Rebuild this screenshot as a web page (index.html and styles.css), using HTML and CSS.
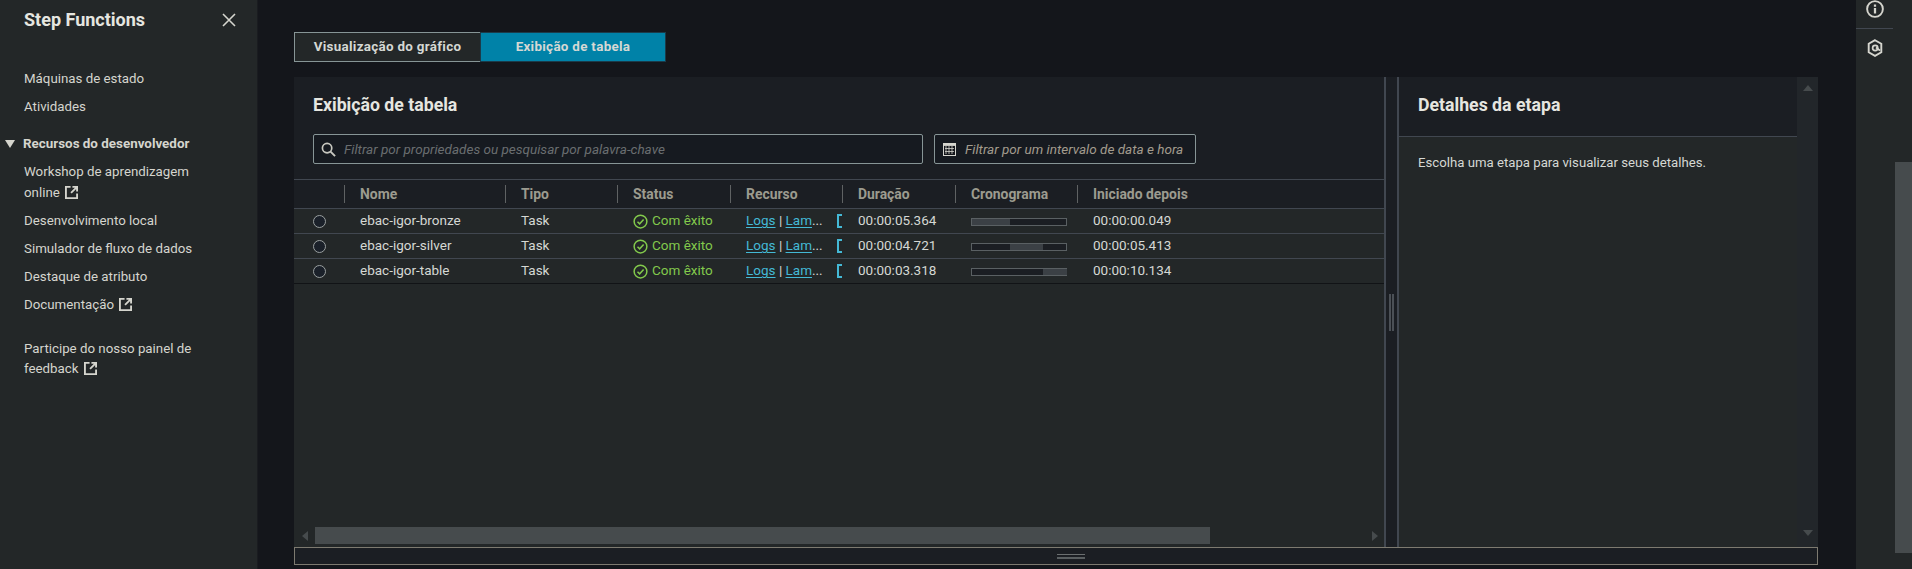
FILE: index.html
```html
<!DOCTYPE html>
<html lang="pt-BR">
<head>
<meta charset="utf-8">
<title>Step Functions</title>
<link rel="stylesheet" href="styles.css">
</head>
<body>
<svg class="defs" width="0" height="0">
	<symbol id="ext" viewBox="0 0 14 14">
		<path d="M6 1H1v12h12V8" fill="none" stroke="currentColor" stroke-width="2"/>
		<path d="M8 1h5v5M13 1L6.5 7.5" fill="none" stroke="currentColor" stroke-width="2"/>
	</symbol>
	<symbol id="ok" viewBox="0 0 16 16">
		<circle cx="8" cy="8" r="6.8" fill="none" stroke="currentColor" stroke-width="1.6"/>
		<path d="M4.8 8.2l2.3 2.3 4.2-4.6" fill="none" stroke="currentColor" stroke-width="1.6"/>
	</symbol>
</svg>

<aside class="side">
	<div class="side-top">
		<h2>Step Functions</h2>
		<svg class="close" width="14" height="14" viewBox="0 0 14 14"><path d="M1 1l12 12M13 1L1 13" stroke="currentColor" stroke-width="1.6" fill="none"/></svg>
	</div>
	<ul class="nav">
		<li><a>Máquinas de estado</a></li>
		<li><a>Atividades</a></li>
	</ul>
	<h3 class="nav-head"><i class="tri"></i>Recursos do desenvolvedor</h3>
	<ul class="nav nav-sub">
		<li><a>Workshop de aprendizagem online <svg class="ext"><use href="#ext"/></svg></a></li>
		<li><a>Desenvolvimento local</a></li>
		<li><a>Simulador de fluxo de dados</a></li>
		<li><a>Destaque de atributo</a></li>
		<li><a>Documentação <svg class="ext"><use href="#ext"/></svg></a></li>
	</ul>
	<p class="feedback"><a>Participe do nosso painel de feedback <svg class="ext"><use href="#ext"/></svg></a></p>
</aside>

<main class="main">
	<div class="tabs">
		<button class="tab">Visualização do gráfico</button>
		<button class="tab tab-on">Exibição de tabela</button>
	</div>

	<section class="work">
		<div class="left">
			<div class="left-top">
				<h1>Exibição de tabela</h1>
				<div class="filters">
					<div class="search">
						<svg width="15" height="15" viewBox="0 0 16 16"><circle cx="6.5" cy="6.5" r="5" fill="none" stroke="currentColor" stroke-width="1.8"/><path d="M10.2 10.2L15 15" stroke="currentColor" stroke-width="2" fill="none"/></svg>
						<span>Filtrar por propriedades ou pesquisar por palavra-chave</span>
					</div>
					<div class="dates">
						<svg width="13" height="13" viewBox="0 0 13 13"><rect x=".5" y=".5" width="12" height="12" fill="#14161b" stroke="currentColor"/><path d="M0 0h13v2.5H0zM3 3v8M6 3v8M9 3v8M2 5.5h9M2 8.5h9" fill="currentColor" stroke="currentColor" stroke-width=".8"/></svg>
						<span>Filtrar por um intervalo de data e hora</span>
					</div>
				</div>
			</div>
			<div class="table-wrap">
				<table class="steps">
					<thead>
						<tr>
							<th class="c-sel"></th>
							<th class="c-name"><span>Nome</span></th>
							<th class="c-type"><span>Tipo</span></th>
							<th class="c-stat"><span>Status</span></th>
							<th class="c-res"><span>Recurso</span></th>
							<th class="c-dur"><span>Duração</span></th>
							<th class="c-time"><span>Cronograma</span></th>
							<th class="c-start"><span>Iniciado depois</span></th>
						</tr>
					</thead>
					<tbody>
						<tr>
							<td class="cell-sel"><i class="radio"></i></td>
							<td>ebac-igor-bronze</td>
							<td>Task</td>
							<td><span class="ok"><svg><use href="#ok"/></svg>Com êxito</span></td>
							<td><div class="res"><a>Logs</a> | <a>Lam</a>...<i class="cut"></i></div></td>
							<td>00:00:05.364</td>
							<td><div class="bar"><i style="margin-left:0;width:38px"></i></div></td>
							<td>00:00:00.049</td>
						</tr>
						<tr>
							<td class="cell-sel"><i class="radio"></i></td>
							<td>ebac-igor-silver</td>
							<td>Task</td>
							<td><span class="ok"><svg><use href="#ok"/></svg>Com êxito</span></td>
							<td><div class="res"><a>Logs</a> | <a>Lam</a>...<i class="cut"></i></div></td>
							<td>00:00:04.721</td>
							<td><div class="bar"><i style="margin-left:38px;width:33px"></i></div></td>
							<td>00:00:05.413</td>
						</tr>
						<tr>
							<td class="cell-sel"><i class="radio"></i></td>
							<td>ebac-igor-table</td>
							<td>Task</td>
							<td><span class="ok"><svg><use href="#ok"/></svg>Com êxito</span></td>
							<td><div class="res"><a>Logs</a> | <a>Lam</a>...<i class="cut"></i></div></td>
							<td>00:00:03.318</td>
							<td><div class="bar"><i style="margin-left:71px;width:24px"></i></div></td>
							<td>00:00:10.134</td>
						</tr>
					</tbody>
				</table>
			</div>
			<div class="hscroll">
				<i class="arr arr-l"></i>
				<div class="hthumb"></div>
				<i class="arr arr-r"></i>
			</div>
		</div>

		<div class="split"><i></i><i></i></div>

		<div class="right">
			<div class="right-body">
				<h2>Detalhes da etapa</h2>
				<p>Escolha uma etapa para visualizar seus detalhes.</p>
			</div>
			<div class="vscroll">
				<i class="arr arr-u"></i>
				<i class="arr arr-d"></i>
			</div>
		</div>
	</section>

	<div class="drawer"><i></i></div>
</main>

<div class="rail">
	<div class="rail-top">
		<svg width="18" height="18" viewBox="0 0 16 16"><circle cx="8" cy="8" r="7" fill="none" stroke="currentColor" stroke-width="1.7"/><path d="M8 7v5M8 4v2" stroke="currentColor" stroke-width="2" fill="none"/></svg>
	</div>
	<div class="rail-btm">
		<svg width="16" height="18" viewBox="0 0 16 18"><path d="M8 1.2l6.3 3.6v8.4L8 16.8l-6.3-3.6V4.8z" fill="none" stroke="currentColor" stroke-width="1.9"/><circle cx="8.2" cy="9" r="2.6" fill="none" stroke="currentColor" stroke-width="1.7"/><path d="M9 8.5l4 3" stroke="currentColor" stroke-width="1.7"/></svg>
	</div>
</div>
<div class="pagebar"><div class="pagethumb"></div></div>
</body>
</html>
```
FILE: styles.css
```css
*{margin:0;padding:0;box-sizing:border-box;list-style:none;}
html,body{height:100%;}
body{display:flex;background:#14161b;overflow:hidden;color:#d5d8d4;font:13.3px/21px Roboto,sans-serif;}
.defs{position:absolute;}
a{color:inherit;}
i{display:block;}

/* sidebar */
.side{width:258px;height:569px;flex:none;background:#232728;border-right:1px solid #1a1c20;padding:8px 24px 0;color:#d5d5ce;}
.side-top{display:flex;justify-content:space-between;align-items:center;height:24px;}
.side-top h2{font-size:18px;line-height:24px;font-weight:700;color:#e6e6e0;}
.close{margin-right:-3px;color:#d5d5ce;}
.nav{margin-top:36px;padding-right:24px;display:flex;flex-direction:column;gap:7px;}
.nav-head{display:flex;align-items:center;margin:16px 0 0 -19px;font-size:13.4px;line-height:21px;font-weight:700;}
.tri{width:0;height:0;border:5px solid transparent;border-top:8px solid #d5d5ce;border-bottom:0;margin-right:8px;}
.nav-sub{margin-top:7px;}
.feedback{margin-top:24px;line-height:20px;}
.ext{width:13px;height:13px;vertical-align:-2px;margin-left:2px;color:#d5d5ce;}

/* main */
.main{flex:1;min-width:0;padding:32px 38px 4px 36px;display:flex;flex-direction:column;}
.tabs{display:flex;height:30px;}
.tab{width:186px;font:700 13.4px/28px Roboto,sans-serif;letter-spacing:.3px;background:#232728;color:#d5d8d4;border:1px solid #879596;border-right:0;}
.tab-on{background:#0082a8;border:1px solid #1b3b4a;}
.work{flex:1;min-height:0;margin-top:15px;display:flex;background:#232728;}

.left{width:1092px;flex:none;display:flex;flex-direction:column;border-right:2px solid #414750;background:#232728;}
.left-top{height:103px;padding:16px 19px 0;background:#1b1e23;border-bottom:1px solid #414750;}
.left-top h1{font-size:17.7px;line-height:24px;font-weight:700;color:#e6e6e0;}
.filters{display:flex;gap:11px;margin-top:17px;}
.search,.dates{height:30px;display:flex;align-items:center;background:#161a20;border:1px solid #879596;border-radius:2px;font-size:13.5px;font-style:italic;}
.search{width:610px;padding-left:7px;gap:8px;color:#6a6e70;}
.search svg{color:#c8c8c0;}
.dates{width:262px;padding-left:8px;gap:9px;color:#a39c8e;}
.dates svg{color:#d5d5ce;}

.table-wrap{flex:1;min-height:0;overflow:hidden;}
.steps{width:100%;table-layout:fixed;border-collapse:collapse;font-size:13.5px;}
.steps th{height:28px;background:#1b1e23;text-align:left;font-weight:700;color:#9c9b8f;font-size:13.9px;border-bottom:1px solid #414750;padding:0;}
.steps th span{display:block;height:18px;line-height:18px;border-left:1px solid #5f6263;padding-left:15px;}
.steps td{height:25px;padding:0 0 0 16px;border-bottom:1px solid #414750;white-space:nowrap;overflow:hidden;}
.steps tr:last-child td{border-bottom:1px solid #111316;}
.c-sel{width:50px;}
.c-name{width:161px;}
.c-type{width:112px;}
.c-stat{width:113px;}
.c-res{width:112px;}
.c-dur{width:113px;}
.c-time{width:122px;}
.steps .cell-sel{padding:2px 0 0 19px;}
.radio{width:13px;height:13px;border:1px solid #9aa0a0;border-radius:50%;background:#1a2029;}
.ok{display:flex;align-items:center;color:#82c94c;gap:4px;}
.ok svg{width:15px;height:15px;margin-top:2px;}
.res{position:relative;color:#d5d8d4;}
.res a{color:#44b9d6;text-decoration:underline;text-underline-offset:2px;}
.cut{position:absolute;left:91px;top:4px;width:5px;height:14px;border:2px solid #44b9d6;border-right:0;}
.bar{width:96px;height:8px;border:1px solid #5a6063;background:#1b1e23;margin-top:2px;}
.bar i{height:6px;background:#3b4045;}

.hscroll{height:20px;padding-bottom:3px;display:flex;align-items:center;background:#232728;position:relative;}
.hthumb{position:absolute;left:21px;top:0;width:895px;height:17px;background:#464b4d;}
.arr{width:0;height:0;border:5px solid transparent;}
.arr-l{border-right:6px solid #464b4d;border-left:0;margin-left:8px;}
.arr-r{border-left:6px solid #464b4d;border-right:0;margin-left:auto;margin-right:6px;}

.split{width:13px;flex:none;display:flex;justify-content:center;align-items:center;gap:1px;background:#1b1e23;border-right:2px solid #414750;}
.split i{width:2px;height:37px;background:#4b5056;}

.right{flex:1;min-width:0;display:flex;background:#232728;}
.right-body{flex:1;min-width:0;}
.right-body h2{height:60px;padding:16px 19px 0;background:#1b1e23;border-bottom:1px solid #414750;font-size:17.7px;line-height:24px;font-weight:700;color:#e6e6e0;}
.right-body p{padding:15px 19px;font-size:13.2px;color:#d5d8d4;}
.vscroll{width:21px;flex:none;display:flex;flex-direction:column;align-items:center;justify-content:space-between;padding:8px 0 11px;background:#22262a;}
.arr-u{border-bottom:6px solid #464b4d;border-top:0;}
.arr-d{border-top:6px solid #464b4d;border-bottom:0;}

.drawer{height:18px;flex:none;background:#1b1e23;border:1px solid #7d7a70;padding-left:29px;display:flex;justify-content:center;align-items:center;}
.drawer i{width:28px;height:5px;border-top:1px solid #6b6f70;border-bottom:2px solid #5a5f61;}

/* right rail + page scroll */
.rail{width:37px;flex:none;background:#232728;color:#d5d5ce;}
.rail-top{height:29px;display:flex;justify-content:center;border-bottom:1px solid #414750;}
.rail-btm{display:flex;justify-content:center;padding-top:10px;}
.pagebar{width:19px;flex:none;background:#232728;padding:162px 0 16px 2px;}
.pagethumb{height:391px;background:#464b4d;}
```
